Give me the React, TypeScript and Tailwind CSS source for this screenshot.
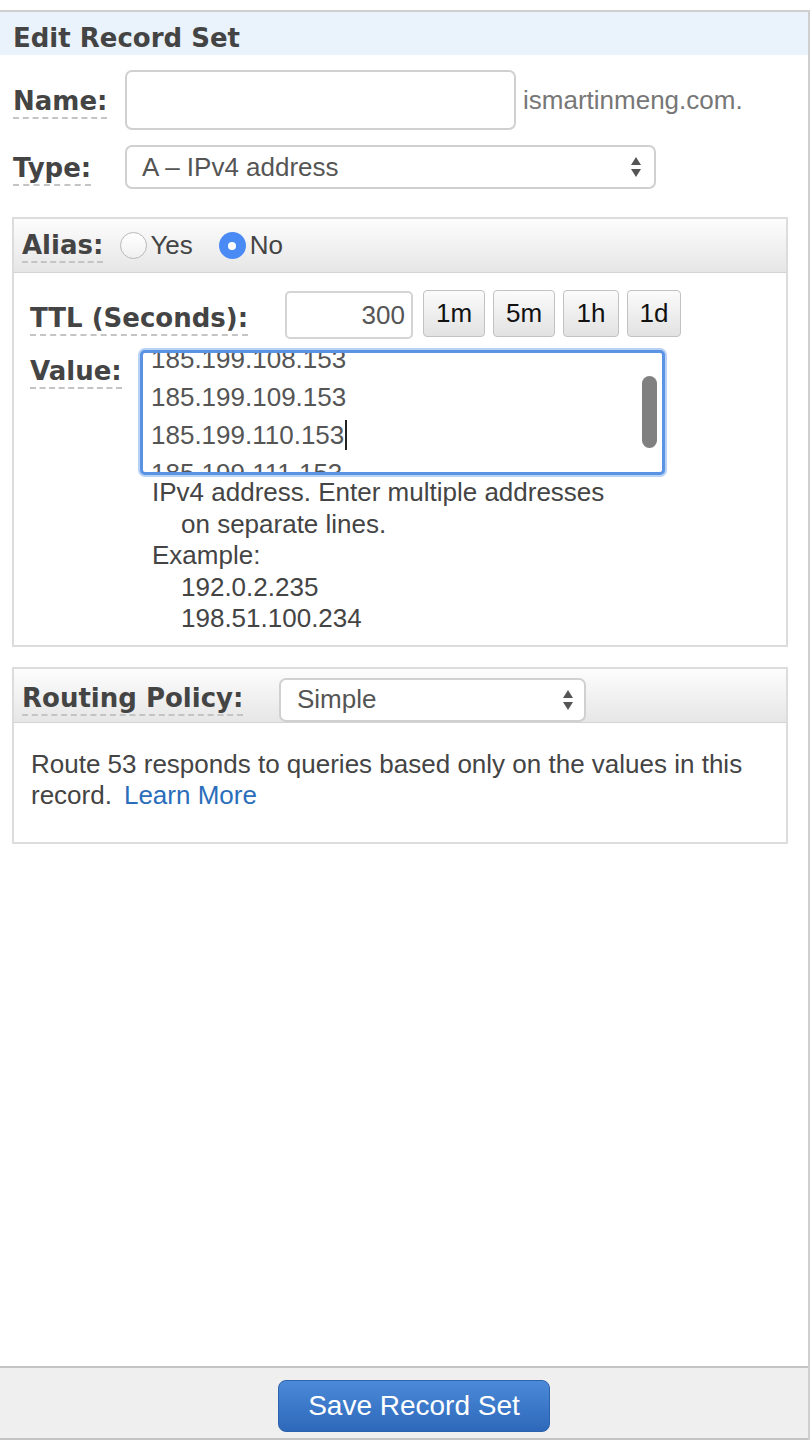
import React from "react";

const LABEL =
  "inline-block font-['DejaVu_Sans',sans-serif] font-bold text-[26px] leading-[30px] text-[#444] border-b-2 border-dashed border-[#c4c4c4] pb-[1px]";
const TXT = "font-['Liberation_Sans',Arial,sans-serif]";

function Arrows() {
  return (
    <svg width="12" height="22" viewBox="0 0 12 22" className="shrink-0">
      <path d="M6 1 L11 9 L1 9 Z" fill="#555" />
      <path d="M6 21 L11 13 L1 13 Z" fill="#555" />
    </svg>
  );
}

function TimeBtn({ label, w }: { label: string; w: string }) {
  return (
    <div
      className={`${w} h-[47px] flex items-center justify-center rounded-[4px] border border-[#c2c2c2] bg-gradient-to-b from-[#fbfbfb] to-[#e2e2e2] ${TXT} text-[26px] text-[#111]`}
    >
      {label}
    </div>
  );
}

export default function App() {
  return (
    <div className="w-[812px] h-[1448px] bg-white flex flex-col pt-[10px]">
      <div className="w-[810px] h-[1430px] flex flex-col border-t-2 border-r-2 border-[#cfcfcf] bg-white">
        {/* Header */}
        <div className="h-[43px] bg-[#eaf2fc] pl-[13px] flex items-center pt-[9px]">
          <span className="font-['DejaVu_Sans',sans-serif] font-bold text-[26px] leading-[30px] text-[#444]">
            Edit Record Set
          </span>
        </div>

        {/* Name */}
        <div className="mt-[15px] pl-[13px] flex items-center h-[60px]">
          <div className="w-[112px] pt-[4px]">
            <span className={LABEL}>Name:</span>
          </div>
          <div className="w-[391px] h-[60px] rounded-[7px] border-2 border-[#d0d0d0] bg-white" />
          <span className={`ml-[7px] ${TXT} text-[26px] text-[#777]`}>ismartinmeng.com.</span>
        </div>

        {/* Type */}
        <div className="mt-[15px] pl-[13px] flex items-center h-[44px]">
          <div className="w-[112px] pt-[4px]">
            <span className={LABEL}>Type:</span>
          </div>
          <div className="w-[531px] h-[44px] rounded-[7px] border-2 border-[#d0d0d0] bg-white flex items-center pl-[15px] pr-[12px] justify-between">
            <span className={`${TXT} text-[26px] text-[#555]`}>A – IPv4 address</span>
            <Arrows />
          </div>
        </div>

        {/* Alias panel */}
        <div className="mt-[28px] ml-[12px] w-[776px] border-2 border-[#dcdcdc]">
          <div className="h-[54px] bg-gradient-to-b from-[#fdfdfd] to-[#e6e6e6] border-b border-[#d4d4d4] flex items-center pl-[8px]">
            <div className="pt-[2px]">
              <span className={LABEL}>Alias:</span>
            </div>
            <div className="ml-[17px] w-[27px] h-[27px] rounded-full border border-[#b8b8b8] bg-gradient-to-b from-white to-[#f0f0f0]" />
            <span className={`ml-[3px] ${TXT} text-[26px] text-[#444]`}>Yes</span>
            <div className="ml-[26px] w-[27px] h-[27px] rounded-full bg-[#4a8af4] flex items-center justify-center">
              <div className="w-[8px] h-[8px] rounded-full bg-white" />
            </div>
            <span className={`ml-[4px] ${TXT} text-[26px] text-[#444]`}>No</span>
          </div>

          <div className="pt-[17px] pl-[16px] pb-[10px]">
            {/* TTL */}
            <div className="flex items-center h-[50px]">
              <div className="w-[255px] pt-[8px]">
                <span className={LABEL}>TTL (Seconds):</span>
              </div>
              <div className="w-[128px] h-[48px] rounded-[5px] border-2 border-[#d4d4d4] flex items-center justify-end pr-[6px]">
                <span className={`${TXT} text-[26px] text-[#555]`}>300</span>
              </div>
              <div className="ml-[10px] flex gap-[8px] -mt-[3px]">
                <TimeBtn label="1m" w="w-[62px]" />
                <TimeBtn label="5m" w="w-[62px]" />
                <TimeBtn label="1h" w="w-[56px]" />
                <TimeBtn label="1d" w="w-[54px]" />
              </div>
            </div>

            {/* Value */}
            <div className="mt-[10px] flex items-start">
              <div className="w-[110px] pt-[6px]">
                <span className={LABEL}>Value:</span>
              </div>
              <div className="flex flex-col">
                <div className="relative w-[525px] h-[125px] rounded-[5px] border-[3px] border-[#5a92e4] shadow-[0_0_0_2px_#b8d2f6] overflow-hidden bg-white">
                  <div className={`-mt-[13px] pl-[8px] ${TXT} text-[26px] leading-[38px] text-[#555]`}>
                    <div>185.199.108.153</div>
                    <div>185.199.109.153</div>
                    <div className="flex items-center">
                      185.199.110.153
                      <span className="inline-block w-[2px] h-[30px] bg-[#222] ml-[1px]" />
                    </div>
                    <div>185.199.111.153</div>
                  </div>
                  <div className="absolute right-[5px] top-[23px] w-[15px] h-[72px] rounded-full bg-[#808080]" />
                </div>
                <div className={`pl-[12px] pt-[2px] ${TXT} text-[26px] leading-[31.5px] text-[#444]`}>
                  <div>IPv4 address. Enter multiple addresses</div>
                  <div className="pl-[29px]">on separate lines.</div>
                  <div>Example:</div>
                  <div className="pl-[29px]">192.0.2.235</div>
                  <div className="pl-[29px]">198.51.100.234</div>
                </div>
              </div>
            </div>
          </div>
        </div>

        {/* Routing Policy panel */}
        <div className="mt-[20px] ml-[12px] w-[776px] border-2 border-[#dcdcdc]">
          <div className="h-[54px] bg-gradient-to-b from-[#fdfdfd] to-[#e6e6e6] border-b border-[#d4d4d4] flex items-end pl-[8px]">
            <div className="w-[257px] self-center pt-[8px]">
              <span className={LABEL}>Routing Policy:</span>
            </div>
            <div className="w-[307px] h-[44px] rounded-[7px] border-2 border-[#d0d0d0] bg-white flex items-center pl-[16px] pr-[10px] justify-between">
              <span className={`${TXT} text-[26px] text-[#555]`}>Simple</span>
              <Arrows />
            </div>
          </div>
          <div className={`pt-[26px] pb-[31px] pl-[17px] pr-[20px] ${TXT} text-[26px] leading-[31px] text-[#444]`}>
            <span>Route 53 responds to queries based only on the values in this record.</span>
            <span className="text-[#2a6ebb] ml-[12px]">Learn More</span>
          </div>
        </div>

        {/* Footer */}
        <div className="mt-auto h-[74px] border-t-2 border-b-2 border-[#c4c4c4] bg-[#efefef] pl-[278px] pt-[12px]">
          <div className="w-[272px] h-[52px] rounded-[8px] border border-[#2d62ad] bg-gradient-to-b from-[#4b8ad9] to-[#2e68ba] flex items-center justify-center">
            <span className={`${TXT} text-[28px] text-white`}>Save Record Set</span>
          </div>
        </div>
      </div>
    </div>
  );
}
